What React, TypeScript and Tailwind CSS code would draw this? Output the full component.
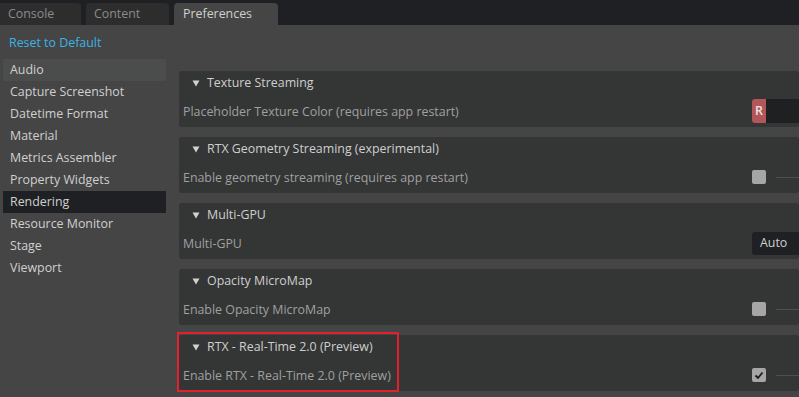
import React from "react";

const font = { fontFamily: '"Open Sans", "Noto Sans", sans-serif' };

const sideItems = [
  "Audio",
  "Capture Screenshot",
  "Datetime Format",
  "Material",
  "Metrics Assembler",
  "Property Widgets",
  "Rendering",
  "Resource Monitor",
  "Stage",
  "Viewport",
];

function Tri() {
  return (
    <svg width="8" height="7" viewBox="0 0 8 7" className="shrink-0">
      <polygon points="0.5,0.5 7.5,0.5 4,6.5" fill="#d2d2d2" />
    </svg>
  );
}

function Checkbox({ checked }: { checked?: boolean }) {
  return (
    <div className="flex items-center flex-1">
      <div className="w-[14px] h-[14px] bg-[#a6a6a6] rounded-[2px] flex items-center justify-center shrink-0">
        {checked && (
          <svg width="10" height="9" viewBox="0 0 10 9">
            <polyline points="1.5,4.5 4,7 8.5,1.5" fill="none" stroke="#1c1c1c" strokeWidth="1.8" />
          </svg>
        )}
      </div>
      <div className="ml-[10px] h-px flex-1 bg-[#4e4f4f]" />
    </div>
  );
}

function Panel({
  title,
  label,
  widget,
}: {
  title: string;
  label: string;
  widget: React.ReactNode;
}) {
  return (
    <div className="bg-[#343535] rounded-[3px] flex flex-col">
      <div className="h-[24px] flex items-center pl-[13px] gap-[7px] text-[#cfcfcf]">
        <Tri />
        <span className="text-[12.4px] pt-[1px]">{title}</span>
      </div>
      <div className="h-[32px] flex items-center pl-[4px]">
        <span className="text-[12.4px] pt-[2px] text-[#a0a0a0] w-[569px] shrink-0">{label}</span>
        <div className="flex-1 flex items-center">{widget}</div>
      </div>
    </div>
  );
}

export default function App() {
  return (
    <div className="w-[799px] h-[397px] bg-[#454545] overflow-hidden flex flex-col" style={font}>
      <div className="h-[25px] bg-[#1f2023] flex items-end gap-[5px] shrink-0">
        <div className="w-[81px] h-[22px] bg-[#2d2d2e] rounded-tr-[4px] text-[#8b8b8b] text-[12.4px] pl-[8px] flex items-center">
          Console
        </div>
        <div className="w-[83px] h-[22px] bg-[#2d2d2e] rounded-t-[4px] text-[#8b8b8b] text-[12.4px] pl-[8px] flex items-center">
          Content
        </div>
        <div className="w-[104px] h-[22px] bg-[#454545] rounded-t-[4px] text-[#d0d0d0] text-[12.4px] pl-[9px] flex items-center">
          Preferences
        </div>
      </div>
      <div className="h-[34px] flex items-center pl-[9px] pt-[2px] shrink-0">
        <span className="text-[#3cb3e6] text-[12.4px]">Reset to Default</span>
      </div>
      <div className="flex flex-1 min-h-0">
        <div className="w-[163px] ml-[3px] flex flex-col shrink-0">
          {sideItems.map((s) => (
            <div
              key={s}
              className={
                "h-[22px] flex items-center pl-[7px] pt-[1px] text-[12.4px] text-[#d0d0d0] " +
                (s === "Rendering" ? "bg-[#1f2023]" : s === "Audio" ? "bg-[#4b4d4d]" : "")
              }
            >
              {s}
            </div>
          ))}
        </div>
        <div className="flex-1 pl-[13px] pt-[12px] flex flex-col gap-[10px] relative">
          <Panel
            title="Texture Streaming"
            label="Placeholder Texture Color (requires app restart)"
            widget={
              <div className="flex flex-1 h-[24px]">
                <div className="w-[14px] h-[24px] bg-[#b45558] rounded-l-[3px] flex items-center justify-center text-[#e6e6e6] text-[12.4px] font-semibold">
                  R
                </div>
                <div className="flex-1 bg-[#1f2022]" />
              </div>
            }
          />
          <Panel
            title="RTX Geometry Streaming (experimental)"
            label="Enable geometry streaming (requires app restart)"
            widget={<Checkbox />}
          />
          <Panel
            title="Multi-GPU"
            label="Multi-GPU"
            widget={
              <div className="flex-1 h-[23px] bg-[#1f2023] rounded-l-[3px] flex items-center pl-[8px] text-[#d0d0d0] text-[12.4px]">
                Auto
              </div>
            }
          />
          <Panel
            title="Opacity MicroMap"
            label="Enable Opacity MicroMap"
            widget={<Checkbox />}
          />
          <Panel
            title="RTX - Real-Time 2.0 (Preview)"
            label="Enable RTX - Real-Time 2.0 (Preview)"
            widget={<Checkbox checked />}
          />
          <div className="absolute left-[11px] top-[273px] w-[222px] h-[60px] border-2 border-[#e3202b] pointer-events-none" />
        </div>
      </div>
    </div>
  );
}
